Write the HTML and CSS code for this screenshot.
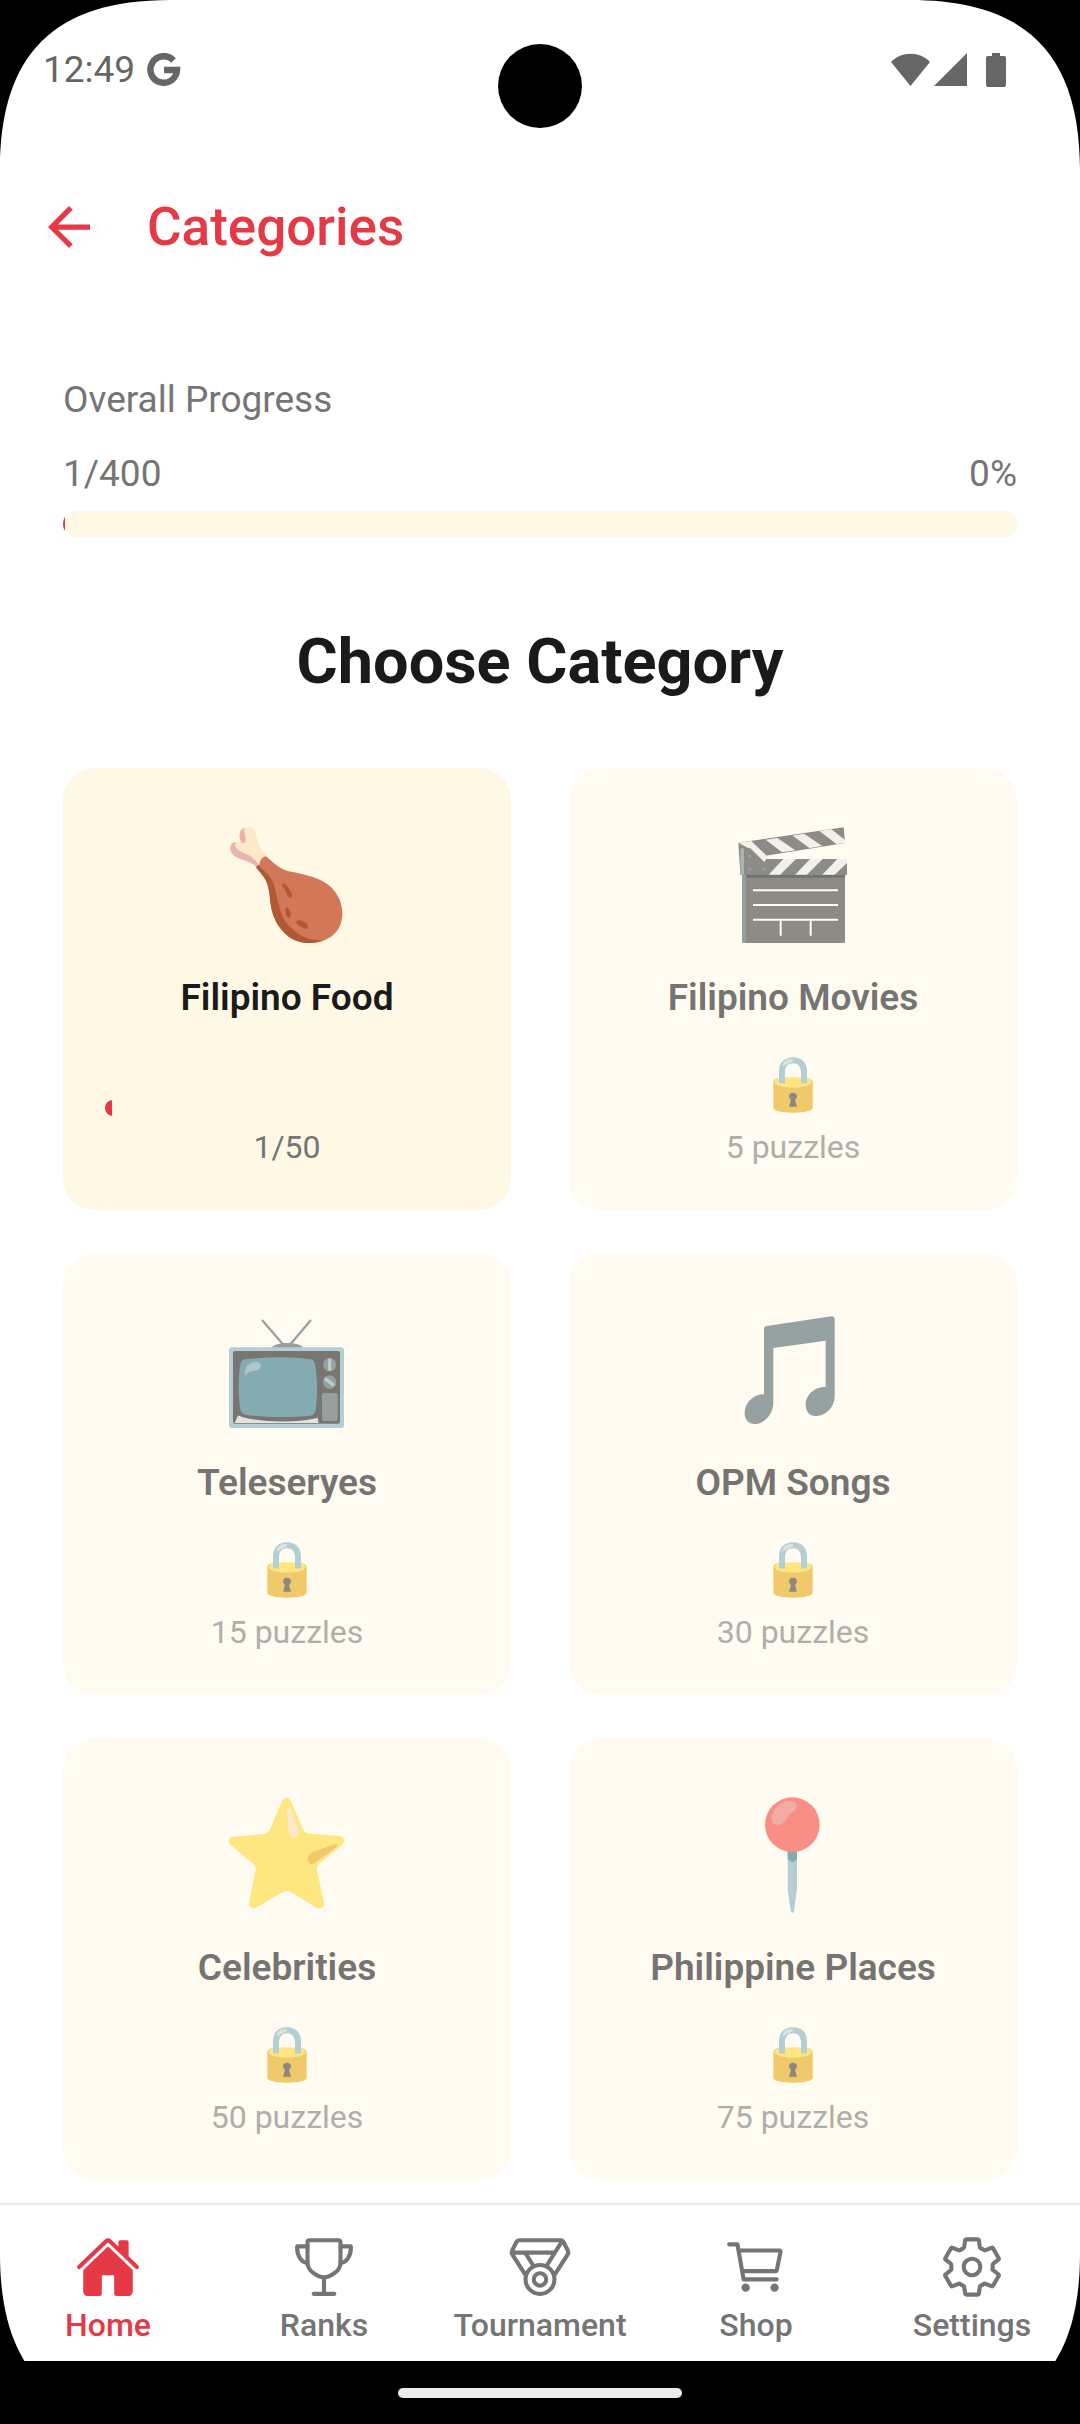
FILE: index.html
```html
<!DOCTYPE html>
<html lang="en">
<head>
<meta charset="utf-8">
<meta name="viewport" content="width=device-width, initial-scale=1">
<title>Categories</title>
<link rel="stylesheet" href="styles.css">
</head>
<body>
<svg class="defs" aria-hidden="true">
  <symbol id="lock" viewBox="615 889 168 168">
    <path d="M657 969V932C657 904 675 890 699 890S741 904 741 932V969H723V935C723 918 713 908 699 908S675 918 675 935V969Z" fill="#b4ced4"/>
    <path d="M668 912C672 900 684 894 698 895C702 899 698 904 690 906C680 908 674 916 669 916Z" fill="#dde4e0"/>
    <path d="M640 964C640 957 650 953 657 951V969H675V951H723V969H741V951C750 954 758 957 758 964V1042C758 1050 732 1056 699 1056S640 1050 640 1042Z" fill="#efc96a"/>
    <path d="M643 964C646 956 652 953 657 951V969H675V951H723V969H741V951C748 954 753 957 755 964C754 974 730 981 699 981S645 974 643 964Z" fill="#fee680"/>
    <path d="M699 996C706 996 711 1001 711 1007C711 1012 708 1015 705 1018L711 1038H687L693 1018C690 1015 687 1012 687 1007C687 1001 692 996 699 996Z" fill="#8c8780"/>
  </symbol>
</svg>

<div class="screen">
  <header>
    <div class="status">
      <span class="clock">12:49</span>
      <svg class="status-icon" width="34" height="34" viewBox="0 0 34 34" aria-label="G"><path d="M26.500 7.500A13.300 13.300 0 1 0 30 17H17" fill="none" stroke="#666664" stroke-width="6.500"/></svg>
      <span class="status-space"></span>
      <svg class="status-icon" width="39" height="34" viewBox="0 0 39 34" aria-hidden="true"><path d="M0 9C10-2 29-2 39 9L19.500 33Z" fill="#666664"/></svg>
      <svg class="status-icon" width="33" height="34" viewBox="0 0 33 34" aria-hidden="true"><path d="M33 0V33H0Z" fill="#666664"/></svg>
      <svg class="status-icon battery" width="20" height="34" viewBox="0 0 20 34" aria-hidden="true"><path d="M6 0H14V3H18Q20 3 20 5V32Q20 34 18 34H2Q0 34 0 32V5Q0 3 2 3H6Z" fill="#666664"/></svg>
    </div>
    <div class="appbar">
      <button class="back" type="button" aria-label="Back"><svg width="42" height="42" viewBox="4 4 16 16" aria-hidden="true"><path d="M20 11H7.830l5.590-5.590L12 4l-8 8 8 8 1.410-1.410L7.830 13H20v-2z" fill="#e63946"/></svg></button>
      <h1 class="title">Categories</h1>
    </div>
  </header>

  <main>
    <section class="overall">
      <div class="overall-label" id="overall-label">Overall Progress</div>
      <div class="overall-row"><span>1/400</span><span>0%</span></div>
      <div class="bar bar-large" role="progressbar" aria-labelledby="overall-label" aria-valuenow="1" aria-valuemax="400"><div class="fill" style="width:0.25%"></div></div>
    </section>

    <h2 class="heading">Choose Category</h2>

    <div class="grid">
      <button class="card" type="button">
        <svg class="emoji" viewBox="537 201 348 348" aria-hidden="true">
          <path d="M541 265C541 252 550 246 562 247L572 248C564 222 572 201 594 201C613 201 618 220 623 243C627 260 638 276 652 291L622 322C602 304 587 303 571 297C553 291 541 280 541 265Z" fill="#fde9c8"/>
          <path d="M541 265C541 252 549 247 557 247C552 262 562 270 577 277C597 286 612 292 627 314L621 322C602 304 587 303 571 297C553 291 541 280 541 265ZM584 204C578 216 592 234 586 247C580 251 574 249 571 242C566 225 568 207 584 204Z" fill="#e8b5ae"/>
          <path d="M650 290C672 310 694 329 716 334C757 342 796 350 826 368C859 389 877 424 877 460C877 510 846 533 820 542C786 551 746 550 716 530C680 500 665 464 661 425C659 400 655 370 642 352L618 322L628 314C630 298 640 288 650 290Z" fill="#d27858"/>
          <path d="M618 322L624 315C644 334 664 348 672 376C685 427 690 466 712 493C742 525 777 544 820 542C786 553 746 552 716 530C680 500 665 464 661 425C659 400 655 370 642 352Z" fill="#af5a33"/>
          <path d="M694 374C701 366 709 374 717 386C726 397 728 409 724 412C717 417 712 409 708 396C704 387 698 382 694 374ZM706 447C711 437 718 446 722 458C724 471 718 475 713 472C707 468 705 459 706 447ZM738 487C743 476 754 481 765 487C775 493 778 505 768 507C758 504 744 498 738 487Z" fill="#af5a33"/>
        </svg>
        <span class="name">Filipino Food</span>
        <span class="slot slot-bar"><span class="bar bar-small" role="progressbar" aria-label="Filipino Food" aria-valuenow="1" aria-valuemax="50"><span class="fill" style="width:2%"></span></span></span>
        <span class="count">1/50</span>
      </button>

      <button class="card locked" type="button" disabled>
        <svg class="emoji" viewBox="525 201 348 348" aria-hidden="true">
          <path d="M535 248L851 202L855 249L617 287L620 297H861V345H541Z" fill="#8d8b86"/>
          <path d="M535 248L574 243L623 290L613 307L566 265ZM617 239L652 234L706 271L666 277ZM698 227L732 221L787 258L748 264ZM778 213L814 208L855 240V249L829 252ZM670 297H708L660 345H625ZM750 297H788L740 345H705ZM832 297H861V309L823 345H786Z" fill="#f1f0ea"/>
          <path d="M541 265H571L614 307L628 297V345H541Z" fill="#8d8b86"/>
          <path d="M541 265H552V345H541Z" fill="#aeb3b0"/>
          <rect x="546" y="344" width="309" height="205" rx="5" fill="#8d8b86"/>
          <path d="M546 344H558V549H551Q546 549 546 544Z" fill="#94a09e"/>
          <path d="M558 345H855V353H558Z" fill="#74726f"/>
          <path d="M564 285H574V293H564ZM564 324H574V332H564ZM607 324H618V332H607Z" fill="#94a09e"/>
          <path d="M579 391H834M579 435H834M579 479H834M662 479V527M752 479V527" fill="none" stroke="#fffdf8" stroke-width="6"/>
        </svg>
        <span class="name">Filipino Movies</span>
        <span class="slot"><svg class="lock" aria-label="Locked"><use href="#lock"/></svg></span>
        <span class="count">5 puzzles</span>
      </button>

      <button class="card locked" type="button" disabled>
        <svg class="emoji" viewBox="537 216 348 348" aria-hidden="true">
          <path d="M638 242L700 314M781 242L720 314" stroke="#98a2a2" stroke-width="7" stroke-linecap="round"/>
          <path d="M665 324C672 304 752 304 760 324Z" fill="#98a09f"/>
          <rect x="537" y="322" width="345" height="242" rx="10" fill="#b4ced4"/>
          <rect x="549" y="333" width="321" height="218" rx="6" fill="#787673"/>
          <path d="M554 549L565 524C610 545 755 547 802 528L806 549Z" fill="#dfe4dd"/>
          <path d="M565 515C600 538 760 543 800 518L804 533C750 548 620 550 563 526Z" fill="#787673"/>
          <path d="M586 358C650 350 730 350 781 358Q793 360 795 373C803 418 803 462 797 509Q795 524 780 527C730 533 640 533 586 524Q573 521 571 509C564 460 565 415 571 373Q573 360 586 358Z" fill="#84abb1"/>
          <path d="M585 404C583 378 600 366 620 366C634 367 636 380 628 388C617 395 599 388 585 407Z" fill="#afc7ca"/>
          <circle cx="839" cy="374" r="20" fill="#98a09f"/>
          <circle cx="839" cy="426" r="20" fill="#98a09f"/>
          <path d="M839 360V388M828 418L849 434" stroke="#b4ced4" stroke-width="10" stroke-linecap="round"/>
          <rect x="816" y="459" width="47" height="84" rx="6" fill="#98a09f"/>
        </svg>
        <span class="name">Teleseryes</span>
        <span class="slot"><svg class="lock" aria-label="Locked"><use href="#lock"/></svg></span>
        <span class="count">15 puzzles</span>
      </button>

      <button class="card locked" type="button" disabled>
        <svg class="emoji" viewBox="525 216 348 348" aria-hidden="true">
          <path d="M612 268Q612 259 621 258L814 229Q824 229 824 239V468C824 503 796 528 768 528C747 528 737 513 737 494C737 463 766 440 797 441V302L640 324V490C638 526 611 552 584 552C564 552 553 536 554 518C555 486 582 463 612 463Z" fill="#96a2a2"/>
        </svg>
        <span class="name">OPM Songs</span>
        <span class="slot"><svg class="lock" aria-label="Locked"><use href="#lock"/></svg></span>
        <span class="count">30 puzzles</span>
      </button>

      <button class="card locked" type="button" disabled>
        <svg class="emoji" viewBox="537 228 348 348" aria-hidden="true">
          <path d="M697 238C702 228 716 228 721 238L760 326Q766 338 778 338L870 345C883 347 886 361 877 371L807 428Q799 436 801 448L822 546C823 559 811 566 800 560L723 514Q710 506 697 514L618 560C607 565 596 558 597 546L617 448Q619 437 610 429L541 371C532 361 537 348 548 347L643 339Q654 338 659 327Z" fill="#fee680"/>
          <path d="M711 262C716 255 721 260 724 268L745 328C751 348 736 352 730 350C717 348 717 334 714 316Z" fill="#fde9c8"/>
          <path d="M858 368C866 370 859 378 854 382L798 424C786 433 777 429 774 419C771 403 781 396 795 391Z" fill="#efc96a"/>
        </svg>
        <span class="name">Celebrities</span>
        <span class="slot"><svg class="lock" aria-label="Locked"><use href="#lock"/></svg></span>
        <span class="count">50 puzzles</span>
      </button>

      <button class="card locked" type="button" disabled>
        <svg class="emoji" viewBox="525 228 348 348" aria-hidden="true">
          <path d="M683 380H711V505L702 570Q697 582 692 570L683 505Z" fill="#b4ced4"/>
          <path d="M683 380H711V414Q697 432 683 414Z" fill="#84abb1"/>
          <circle cx="697" cy="311" r="82" fill="#f98f84"/>
          <path d="M636 299C631 268 660 239 689 239C716 240 716 258 698 274C680 286 676 307 660 311C647 313 638 309 636 299Z" fill="#f3aca3"/>
        </svg>
        <span class="name">Philippine Places</span>
        <span class="slot"><svg class="lock" aria-label="Locked"><use href="#lock"/></svg></span>
        <span class="count">75 puzzles</span>
      </button>
    </div>
  </main>

  <nav class="tabs" aria-label="Main">
    <a class="tab active" href="#home" aria-current="page">
      <svg class="tab-icon" viewBox="0 0 512 512" aria-hidden="true"><path fill="currentColor" d="M261.560 101.280a8 8 0 00-11.060 0L66.400 277.150a8 8 0 00-2.470 5.790L63.900 448a32 32 0 0032 32H192a16 16 0 0016-16V328a8 8 0 018-8h80a8 8 0 018 8v136a16 16 0 0016 16h96.060a32 32 0 0032-32V282.940a8 8 0 00-2.470-5.790z"/><path fill="currentColor" d="M490.910 244.150l-74.800-71.560V64a16 16 0 00-16-16h-48a16 16 0 00-16 16v32l-57.920-55.380C272.770 35.140 264.710 32 256 32c-8.680 0-16.720 3.140-22.140 8.630l-212.700 203.500c-6.220 6-7 15.870-1.340 22.370A16 16 0 0043 267.560L250.500 69.280a8 8 0 0111.060 0l207.520 198.280a16 16 0 0022.590-.44c6.140-6.360 5.630-16.860-.76-22.970z"/></svg>
      <span>Home</span>
    </a>
    <a class="tab" href="#ranks">
      <svg class="tab-icon line" viewBox="0 0 512 512" aria-hidden="true"><path d="M176 464h160M256 464V336M384 224c0-50.640-.08-134.630-.12-160a16 16 0 00-16-16l-223.790.26a16 16 0 00-16 15.950c0 30.580-.13 129.170-.13 159.790 0 64.280 83 112 128 112S384 288.280 384 224z"/><path d="M128 96H48v16c0 55.220 33.550 112 80 112M384 96h80v16c0 55.220-33.550 112-80 112"/></svg>
      <span>Ranks</span>
    </a>
    <a class="tab" href="#tournament">
      <svg class="tab-icon line" viewBox="0 0 512 512" aria-hidden="true"><circle cx="256" cy="352" r="112"/><circle cx="256" cy="352" r="48"/><path d="M147 323L41.840 159.320a32 32 0 01-1.700-31.610l31-62A32 32 0 0199.780 48h312.440a32 32 0 0128.620 17.690l31 62a32 32 0 01-1.700 31.610L365 323M371 144H37M428.740 52.600L305 250M140.550 144L207 250"/></svg>
      <span>Tournament</span>
    </a>
    <a class="tab" href="#shop">
      <svg class="tab-icon line" viewBox="0 0 512 512" aria-hidden="true"><circle cx="176" cy="416" r="16" fill="currentColor"/><circle cx="400" cy="416" r="16" fill="currentColor"/><path d="M48 80h64l48 272h256"/><path d="M160 288h249.440a8 8 0 007.850-6.430l28.800-144a8 8 0 00-7.850-9.570H128"/></svg>
      <span>Shop</span>
    </a>
    <a class="tab" href="#settings">
      <svg class="tab-icon line" viewBox="0 0 512 512" aria-hidden="true"><path d="M262.290 192.310a64 64 0 1057.400 57.400 64.130 64.130 0 00-57.400-57.400zM416.390 256a154.340 154.340 0 01-1.530 20.790l45.210 35.460a10.810 10.810 0 012.450 13.750l-42.770 74a10.810 10.810 0 01-13.140 4.590l-44.900-18.080a16.110 16.110 0 00-15.170 1.750A164.480 164.480 0 01325 400.800a15.940 15.940 0 00-8.820 12.140l-6.730 47.890a11.080 11.080 0 01-10.680 9.170h-85.540a11.110 11.110 0 01-10.690-8.870l-6.720-47.820a16.070 16.070 0 00-9-12.220 155.300 155.300 0 01-21.460-12.570 16 16 0 00-15.110-1.710l-44.890 18.070a10.810 10.810 0 01-13.140-4.580l-42.770-74a10.800 10.800 0 012.450-13.750l38.210-30a16.050 16.050 0 006-14.080c-.36-4.170-.58-8.330-.58-12.500s.21-8.270.58-12.350a16 16 0 00-6.070-13.940l-38.190-30A10.810 10.810 0 0149.480 186l42.770-74a10.810 10.810 0 0113.140-4.590l44.900 18.080a16.110 16.110 0 0015.170-1.750A164.480 164.480 0 01187 111.200a15.940 15.940 0 008.820-12.140l6.730-47.890A11.080 11.080 0 01213.230 42h85.540a11.110 11.110 0 0110.690 8.870l6.720 47.820a16.070 16.070 0 009 12.220 155.300 155.300 0 0121.460 12.570 16 16 0 0015.110 1.710l44.890-18.070a10.810 10.810 0 0113.140 4.580l42.770 74a10.800 10.800 0 01-2.450 13.750l-38.210 30a16.050 16.050 0 00-6.050 14.080c.33 4.140.55 8.300.55 12.470z"/></svg>
      <span>Settings</span>
    </a>
  </nav>

  <div class="gesture"><span class="pill"></span></div>

  <div class="camera"></div>
  <svg class="corner top left" viewBox="0 0 170 170" aria-hidden="true"><path d="M0 0H170C54 0 0 54 0 170Z"/></svg>
  <svg class="corner top right" viewBox="0 0 170 170" aria-hidden="true"><path d="M170 0H0C116 0 170 54 170 170Z"/></svg>
  <svg class="corner bottom left" viewBox="0 0 170 170" aria-hidden="true"><path d="M0 170H170C54 170 0 116 0 0Z"/></svg>
  <svg class="corner bottom right" viewBox="0 0 170 170" aria-hidden="true"><path d="M170 170H0C116 170 170 116 170 0Z"/></svg>
</div>
</body>
</html>
```

FILE: styles.css
```css
* {
  box-sizing: border-box;
}

body {
  margin: 0;
  background: #000;
  color: #757575;
  font-family: Roboto, "Noto Sans", sans-serif;
}

.defs {
  display: none;
}

.screen {
  position: relative;
  display: flex;
  flex-direction: column;
  min-height: 100vh;
  background: #fff;
}

/* Status bar */
.status {
  display: flex;
  align-items: center;
  gap: 4px;
  padding: 49px 74px 0 43px;
  color: #666664;
}

.clock {
  margin-right: 8px;
  font-size: 37px;
  line-height: 42px;
}

.status-space {
  flex: 1;
}

.battery {
  margin-left: 15px;
}

/* App bar */
.appbar {
  display: flex;
  align-items: center;
  gap: 57px;
  padding: 104px 48px 0;
}

.back {
  display: flex;
  padding: 0;
  border: 0;
  background: none;
}

.title {
  margin: 0;
  color: #e63946;
  font-size: 53px;
  font-weight: 500;
  line-height: 64px;
}

/* Content */
main {
  flex: 1;
  padding: 119px 63px 23px;
}

.overall {
  font-size: 37px;
  line-height: 44px;
}

.overall-row {
  display: flex;
  justify-content: space-between;
  margin: 30px 0 15px;
}

.bar {
  display: block;
  overflow: hidden;
  background: #fff8e5;
}

.bar-large {
  height: 26px;
  border-radius: 13px;
}

.bar-small {
  width: 100%;
  height: 16px;
  border-radius: 8px;
}

.fill {
  display: block;
  height: 100%;
  background: #e63946;
}

.heading {
  margin: 87px 0 68px;
  color: #1a1a1a;
  font-size: 63px;
  font-weight: 700;
  line-height: 76px;
  text-align: center;
}

.grid {
  display: grid;
  grid-template-columns: 1fr 1fr;
  gap: 43px 58px;
}

.card {
  display: flex;
  flex-direction: column;
  align-items: center;
  padding: 59px 42px 43px;
  border: 0;
  border-radius: 32px;
  background: #fff8e5;
  color: #757575;
  font-family: inherit;
}

.emoji {
  width: 116px;
  height: 116px;
  overflow: visible;
}

.name {
  margin: 33px 0 37px;
  color: #1a1a1a;
  font-size: 37px;
  font-weight: 600;
  line-height: 44px;
}

.slot {
  display: flex;
  justify-content: center;
  align-items: flex-start;
  width: 100%;
  height: 59px;
}

.slot-bar {
  align-items: flex-end;
}

.lock {
  width: 56px;
  height: 56px;
}

.count {
  margin-top: 11px;
  font-size: 32px;
  line-height: 40px;
}

.locked {
  background: #fffbf0;
  color: #afaeab;
}

.locked .name {
  color: #757472;
}

/* Bottom navigation */
.tabs {
  display: grid;
  grid-template-columns: repeat(5, 1fr);
  padding: 29px 0 16px;
  border-top: 2px solid #ebebeb;
  background: #fff;
  box-shadow: 0 -2px 4px rgba(0, 0, 0, 0.03);
}

.tab {
  display: flex;
  flex-direction: column;
  align-items: center;
  gap: 5px;
  color: #757575;
  font-size: 32px;
  font-weight: 500;
  line-height: 40px;
  text-decoration: none;
}

.active {
  color: #e63946;
}

.tab-icon {
  width: 66px;
  height: 66px;
}

.line {
  fill: none;
  stroke: currentColor;
  stroke-width: 32;
  stroke-linecap: round;
  stroke-linejoin: round;
}

.gesture {
  display: flex;
  justify-content: center;
  padding: 27px 0 26px;
  background: #000;
}

.pill {
  width: 284px;
  height: 10px;
  border-radius: 5px;
  background: #ececea;
}

/* Device cut-outs drawn over the screen */
.camera {
  position: absolute;
  top: 44px;
  left: calc(50% - 42px);
  width: 84px;
  height: 84px;
  border-radius: 50%;
  background: #000;
}

.corner {
  position: absolute;
  width: 170px;
  height: 170px;
  pointer-events: none;
}

.top {
  top: 0;
}

.bottom {
  bottom: 0;
}

.left {
  left: 0;
}

.right {
  right: 0;
}
```
